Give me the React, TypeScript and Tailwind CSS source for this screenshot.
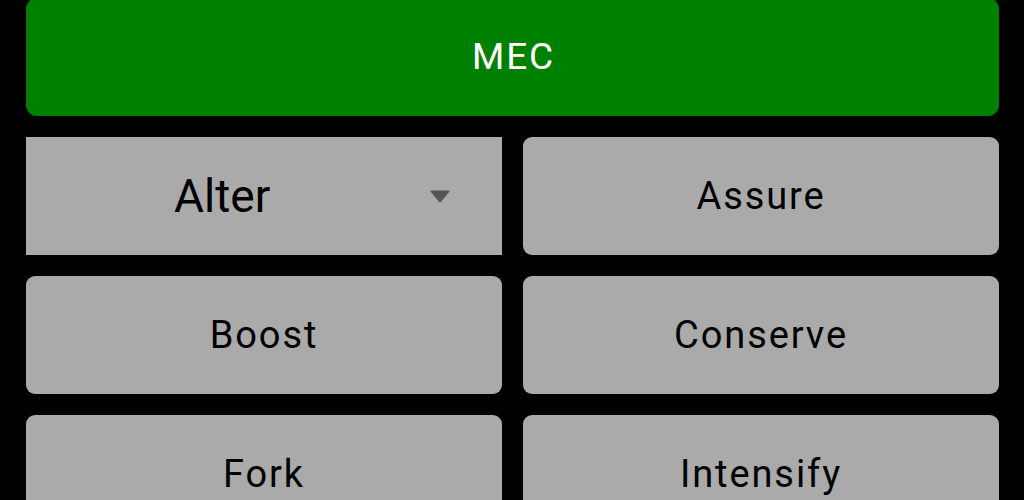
const actions = ['Assure', 'Boost', 'Conserve', 'Fork', 'Intensify'];

function ActionButton({ label }: { label: string }) {
  return (
    <button
      type="button"
      className="h-[118px] rounded-[9px] bg-[#aaaaaa] flex items-center justify-center text-[38px] tracking-[0.05em] text-black leading-none"
    >
      {label}
    </button>
  );
}

function ModeSelect() {
  return (
    <div className="h-[118px] bg-[#aaaaaa] flex items-center pl-[148px] pr-[51px]">
      <span className="text-[46px] leading-none text-black flex-1 text-left pb-[1px]">Alter</span>
      <svg width="22" height="13" viewBox="0 0 22 13" className="shrink-0">
        <path
          d="M2.5 0.5 H19.5 Q21.6 0.5 20.2 2 L12.3 11.6 Q11 13 9.7 11.6 L1.8 2 Q0.4 0.5 2.5 0.5 Z"
          fill="#555555"
        />
      </svg>
    </div>
  );
}

export default function App() {
  return (
    <div
      className="w-[1024px] h-[500px] overflow-hidden bg-black pl-[26px] pr-[25px] flex flex-col gap-[21px]"
      style={{ fontFamily: 'Roboto, "Noto Sans", sans-serif' }}
    >
      <button
        type="button"
        className="-mt-[2px] h-[118px] shrink-0 rounded-[11px] bg-[#008000] flex items-center justify-center pl-[2px] pb-[1px] text-[37px] tracking-[0.05em] text-white leading-none"
      >
        MEC
      </button>
      <div className="grid grid-cols-2 gap-[21px] shrink-0">
        <ModeSelect />
        {actions.map((a) => (
          <ActionButton key={a} label={a} />
        ))}
      </div>
    </div>
  );
}
